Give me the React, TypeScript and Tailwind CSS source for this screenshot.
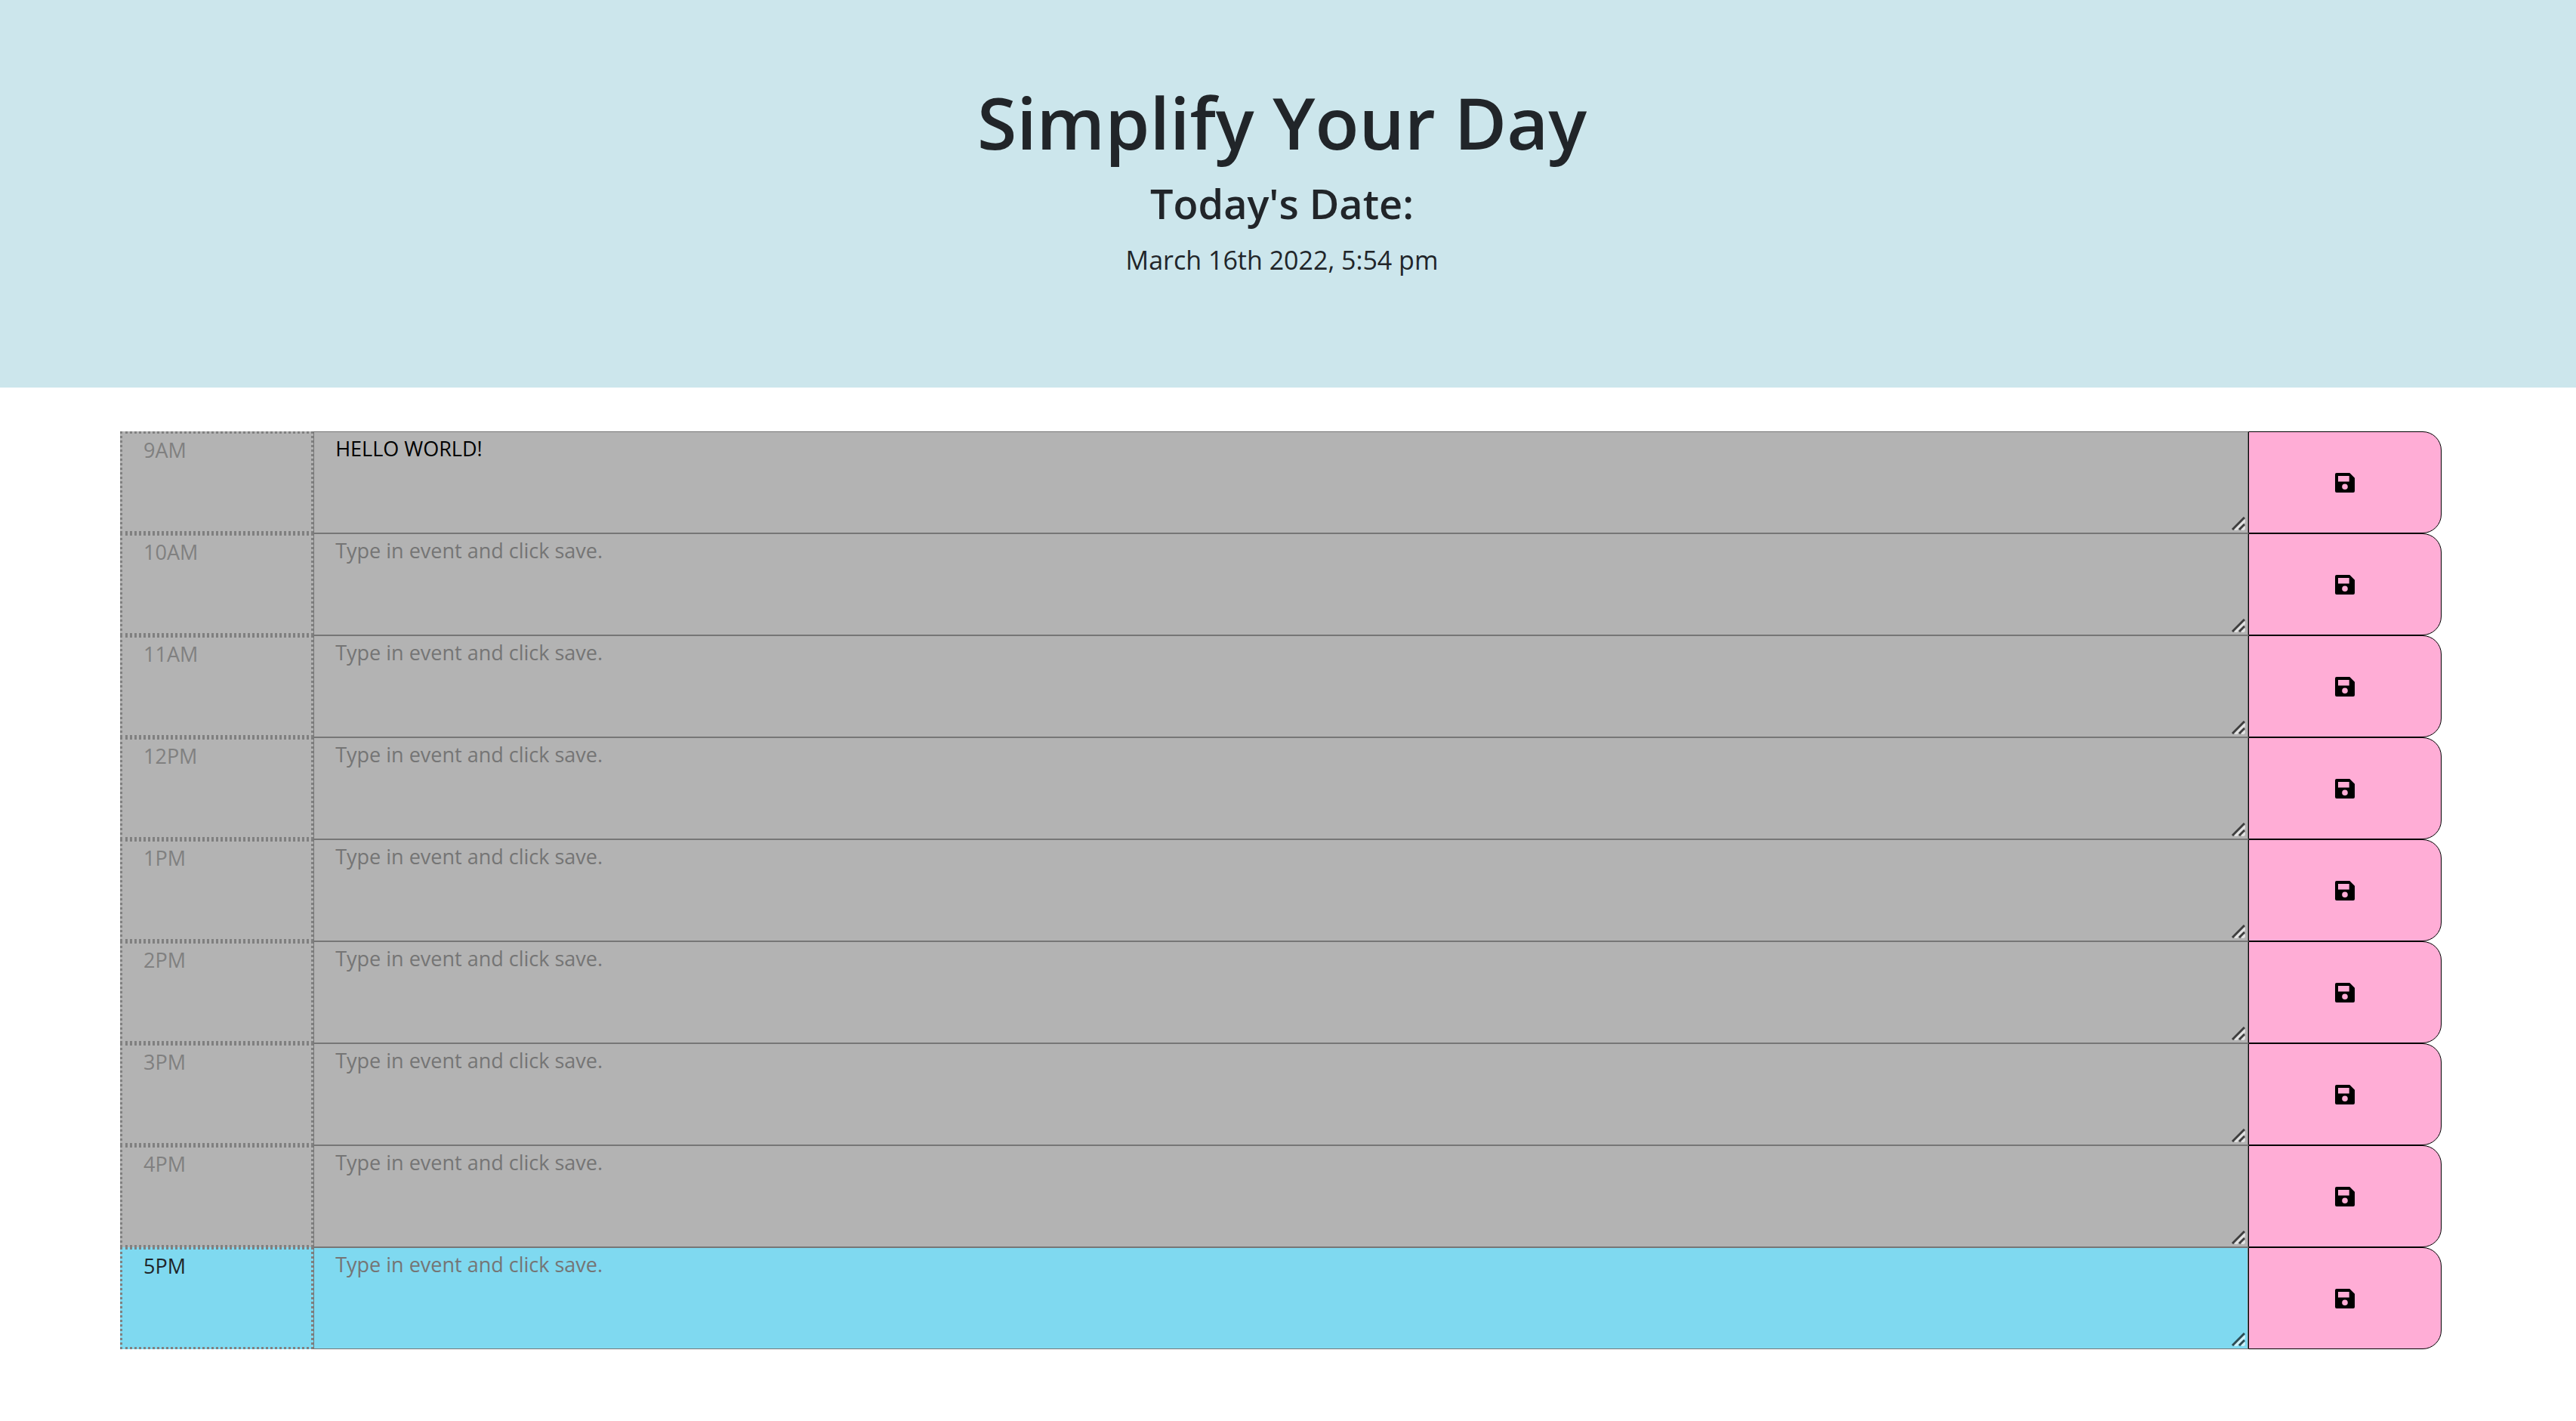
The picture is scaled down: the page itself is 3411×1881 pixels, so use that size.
import React from "react";

type Slot = { hour: string; text?: string; current?: boolean };

const slots: Slot[] = [
  { hour: "9AM", text: "HELLO WORLD!" },
  { hour: "10AM" },
  { hour: "11AM" },
  { hour: "12PM" },
  { hour: "1PM" },
  { hour: "2PM" },
  { hour: "3PM" },
  { hour: "4PM" },
  { hour: "5PM", current: true },
];

function SaveIcon() {
  return (
    <svg viewBox="0 0 26 26" className="size-[26px]" fill="currentColor" aria-hidden="true">
      <path
        fillRule="evenodd"
        d="M2 0H19.3L26 6.7V24a2 2 0 0 1-2 2H2a2 2 0 0 1-2-2V2A2 2 0 0 1 2 0ZM4 4V11.6H18.7V4ZM13 14.5a3.8 3.8 0 1 0 0 7.6a3.8 3.8 0 1 0 0-7.6Z"
      />
    </svg>
  );
}

function ResizeGrip() {
  return (
    <svg
      viewBox="0 0 18 18"
      className="pointer-events-none absolute right-1 bottom-1 size-[18px]"
      fill="none"
      aria-hidden="true"
    >
      <path d="M4.5 18L18 4.5M13.5 18L18 13.5" stroke="#fff" strokeOpacity="0.6" strokeWidth="4" />
      <path d="M1 17L17 1M10 17L17 10" stroke="#000" strokeOpacity="0.65" strokeWidth="3" />
    </svg>
  );
}

function Row({ hour, text, current }: Slot) {
  const id = `event-${hour}`;
  const bg = current ? "bg-[#7fd9f0]" : "bg-[#b3b3b3]";
  return (
    <div className="grid h-[135px] grid-cols-12">
      <label
        htmlFor={id}
        className={`border-[3px] border-dotted border-[#808080] px-7 pt-0.5 ${bg} ${current ? "text-[#212529]" : "text-[#808080]"}`}
      >
        {hour}
      </label>
      <div className="relative col-span-10">
        <textarea
          id={id}
          defaultValue={text}
          placeholder="Type in event and click save."
          className={`block h-full w-full resize-none border border-[#767676] px-7 pt-0.5 text-black placeholder:text-[#757575] ${bg}`}
        />
        <ResizeGrip />
      </div>
      <button
        type="button"
        aria-label={`Save ${hour}`}
        className="flex items-center justify-center rounded-r-[25px] border border-black bg-[#ffadd6] text-black"
      >
        <SaveIcon />
      </button>
    </div>
  );
}

export default function App() {
  return (
    <div className="min-h-screen bg-white font-['Open_Sans',sans-serif] text-[27px] leading-10 text-[#212529]">
      <header className="bg-[#cce6ec] pt-24 pr-4 pb-[137px] text-center">
        <h1 className="text-[95px] leading-[130px] font-semibold">Simplify Your Day</h1>
        <h2 className="text-[54px] leading-[86px] font-semibold">Today's Date:</h2>
        <p className="text-[34px] leading-[64px]">March 16th 2022, 5:54 pm</p>
      </header>
      <main className="pt-[58px] pr-[178px] pb-[95px] pl-[159px]">
        {slots.map((slot) => (
          <Row key={slot.hour} {...slot} />
        ))}
      </main>
    </div>
  );
}
